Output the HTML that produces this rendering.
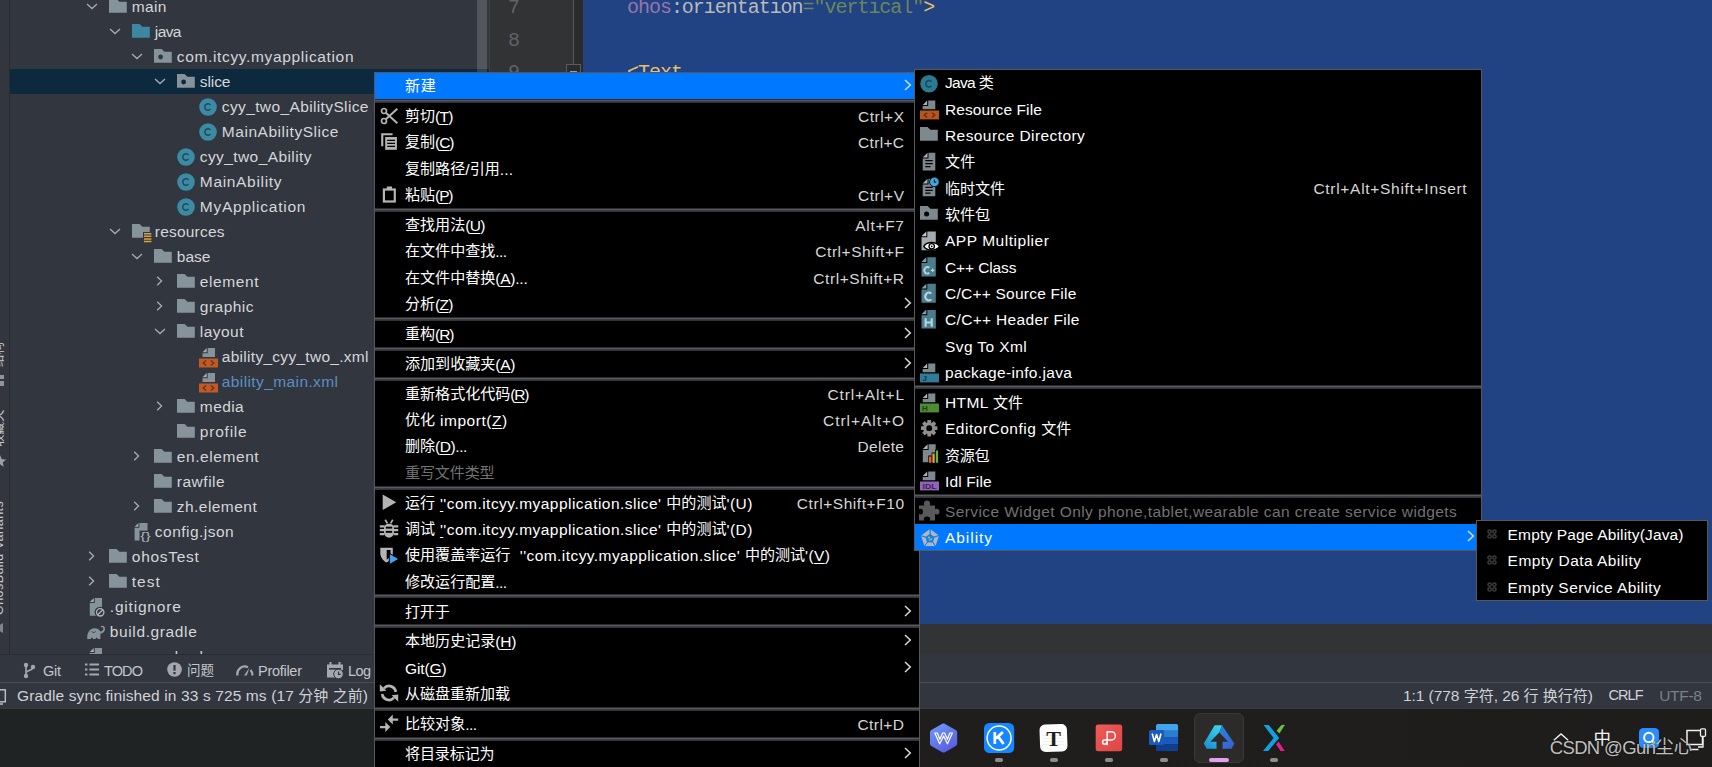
<!DOCTYPE html>
<html lang="zh-CN"><head><meta charset="utf-8"><title>DevEco Studio</title><style>
html,body{margin:0;padding:0;background:#32363f;}
body{width:1712px;height:767px;position:relative;overflow:hidden;font-family:"Liberation Sans","Noto Sans CJK SC",sans-serif;}
.r{position:absolute;display:block;}
.t{position:absolute;white-space:pre;display:block;}
.m{font-family:"Liberation Mono","DejaVu Sans Mono",monospace;}
u{text-decoration:underline;text-underline-offset:2px;text-decoration-thickness:1px;}
</style></head>
<body>
<div class="r" style="left:0px;top:0px;width:1712px;height:767px;background:#32363f;"></div>
<div class="r" style="left:583px;top:0px;width:1129px;height:624px;background:#214283;"></div>
<div class="r" style="left:489px;top:0px;width:94px;height:624px;background:#313335;"></div>
<div class="r" style="left:573px;top:0px;width:1px;height:624px;background:#555759;"></div>
<div class="r" style="left:574px;top:0px;width:9px;height:624px;background:#2b2b2b;"></div>
<div class="r" style="left:477px;top:0px;width:10px;height:654px;background:#53565d;"></div>
<div class="r" style="left:487px;top:0px;width:2px;height:654px;background:#32363f;"></div>
<div class="r" style="left:489px;top:0px;width:1px;height:654px;background:#3d3f43;"></div>
<div class="r" style="left:0px;top:0px;width:9px;height:654px;background:#33363f;"></div>
<div class="r" style="left:9px;top:0px;width:1px;height:654px;background:#2a2b2d;"></div>
<div class="r" style="left:489px;top:624px;width:1223px;height:31px;background:#313335;"></div>
<div class="r" style="left:0px;top:654px;width:1712px;height:29px;background:#32363f;"></div>
<div class="r" style="left:0px;top:654px;width:489px;height:1px;background:#2c2e33;"></div>
<div class="r" style="left:0px;top:682px;width:1712px;height:1px;background:#4a4c50;"></div>
<div class="r" style="left:0px;top:683px;width:1712px;height:25px;background:#32363f;"></div>
<div class="r" style="left:0px;top:708px;width:1712px;height:59px;background:linear-gradient(90deg,#202324 0,#202324 22%,#1f1e1c 54%,#1f1d1b 100%);"></div>
<div class="r" style="left:0px;top:708px;width:1712px;height:1px;background:#3a3b3b;"></div>
<span class="t m" style="left:627px;top:-9px;height:33px;line-height:33px;font-size:20px;letter-spacing:-1.03px"><span style="color:#9876aa">ohos</span><span style="color:#bababa">:orientation</span><span style="color:#6a8759">="vertical"</span><span style="color:#e8bf6a">&gt;</span></span>
<span class="t m" style="left:627px;top:56px;height:33px;line-height:33px;font-size:20px;letter-spacing:-1.03px"><span style="color:#e8bf6a">&lt;Text</span></span>
<span class="t m" style="left:508px;top:-9px;height:33px;line-height:33px;font-size:20px;color:#606366">7</span>
<span class="t m" style="left:508px;top:24px;height:33px;line-height:33px;font-size:20px;color:#606366">8</span>
<span class="t m" style="left:508px;top:56px;height:33px;line-height:33px;font-size:20px;color:#606366">9</span>
<svg class="r" style="left:566px;top:64.3px;" width="16" height="16" viewBox="0 0 16 16"><rect x="0.5" y="0.5" width="14" height="14" fill="#2b2b2b" stroke="#5a5d60"/><rect x="4" y="7" width="7" height="1.4" fill="#9a9da0"/></svg>
<div class="r" style="left:10px;top:69px;width:467px;height:25px;background:#0d293e;"></div>
<div class="r" style="left:477px;top:69px;width:10px;height:25px;background:#2d4358;"></div>
<div class="r" style="left:487px;top:69px;width:2px;height:25px;background:#0d293e;"></div>
<svg class="r" style="left:85.75px;top:2.55px;" width="12" height="8" viewBox="0 0 12 8"><path d="M1 1.100 L6 5.550 L11 1.100" fill="none" stroke="#a7abb1" stroke-width="1.350"/></svg>
<svg class="r" style="left:109px;top:-0.7000000000000002px;" width="18" height="14" viewBox="0 0 18 14"><path d="M0 0 H7.6 L10.4 2.8 H17.8 V13.7 H0 Z" fill="#87939a"/></svg>
<span class="t" style="left:131.8px;top:-6px;height:25px;line-height:25px;color:#d4d6d9;font-size:15.5px;letter-spacing:0.364px;">main</span>
<svg class="r" style="left:108.75px;top:27.55px;" width="12" height="8" viewBox="0 0 12 8"><path d="M1 1.100 L6 5.550 L11 1.100" fill="none" stroke="#a7abb1" stroke-width="1.350"/></svg>
<svg class="r" style="left:132px;top:24.3px;" width="18" height="14" viewBox="0 0 18 14"><path d="M0 0 H7.6 L10.4 2.8 H17.8 V13.7 H0 Z" fill="#3e87a3"/></svg>
<span class="t" style="left:154.8px;top:19px;height:25px;line-height:25px;color:#d4d6d9;font-size:15.5px;letter-spacing:-0.579px;">java</span>
<svg class="r" style="left:130.75px;top:52.55px;" width="12" height="8" viewBox="0 0 12 8"><path d="M1 1.100 L6 5.550 L11 1.100" fill="none" stroke="#a7abb1" stroke-width="1.350"/></svg>
<svg class="r" style="left:154px;top:49.3px;" width="18" height="14" viewBox="0 0 18 14"><path d="M0 0 H7.6 L10.4 2.8 H17.8 V13.7 H0 Z" fill="#87939a"/><circle cx="6.6" cy="8" r="2.4" fill="#32363f"/></svg>
<span class="t" style="left:176.8px;top:44px;height:25px;line-height:25px;color:#d4d6d9;font-size:15.5px;letter-spacing:0.645px;">com.itcyy.myapplication</span>
<svg class="r" style="left:153.75px;top:77.55px;" width="12" height="8" viewBox="0 0 12 8"><path d="M1 1.100 L6 5.550 L11 1.100" fill="none" stroke="#a7abb1" stroke-width="1.350"/></svg>
<svg class="r" style="left:177px;top:74.3px;" width="18" height="14" viewBox="0 0 18 14"><path d="M0 0 H7.6 L10.4 2.8 H17.8 V13.7 H0 Z" fill="#87939a"/><circle cx="6.6" cy="8" r="2.4" fill="#0d293e"/></svg>
<span class="t" style="left:199.8px;top:69px;height:25px;line-height:25px;color:#d4d6d9;font-size:15.5px;letter-spacing:-0.079px;">slice</span>
<svg class="r" style="left:198.5px;top:97.5px;" width="18" height="18" viewBox="0 0 18 18"><circle cx="9" cy="9" r="8.8" fill="#3c8ba5"/><path d="M11.500 7 A3.200 3.200 0 1 0 11.500 11" fill="none" stroke="#27485a" stroke-width="1.500"/></svg>
<span class="t" style="left:221.8px;top:94px;height:25px;line-height:25px;color:#d4d6d9;font-size:15.5px;letter-spacing:0.376px;">cyy_two_AbilitySlice</span>
<svg class="r" style="left:198.5px;top:122.5px;" width="18" height="18" viewBox="0 0 18 18"><circle cx="9" cy="9" r="8.8" fill="#3c8ba5"/><path d="M11.500 7 A3.200 3.200 0 1 0 11.500 11" fill="none" stroke="#27485a" stroke-width="1.500"/></svg>
<span class="t" style="left:221.8px;top:119px;height:25px;line-height:25px;color:#d4d6d9;font-size:15.5px;letter-spacing:0.544px;">MainAbilitySlice</span>
<svg class="r" style="left:176.5px;top:147.5px;" width="18" height="18" viewBox="0 0 18 18"><circle cx="9" cy="9" r="8.8" fill="#3c8ba5"/><path d="M11.500 7 A3.200 3.200 0 1 0 11.500 11" fill="none" stroke="#27485a" stroke-width="1.500"/></svg>
<span class="t" style="left:199.8px;top:144px;height:25px;line-height:25px;color:#d4d6d9;font-size:15.5px;letter-spacing:0.409px;">cyy_two_Ability</span>
<svg class="r" style="left:176.5px;top:172.5px;" width="18" height="18" viewBox="0 0 18 18"><circle cx="9" cy="9" r="8.8" fill="#3c8ba5"/><path d="M11.500 7 A3.200 3.200 0 1 0 11.500 11" fill="none" stroke="#27485a" stroke-width="1.500"/></svg>
<span class="t" style="left:199.8px;top:169px;height:25px;line-height:25px;color:#d4d6d9;font-size:15.5px;letter-spacing:0.675px;">MainAbility</span>
<svg class="r" style="left:176.5px;top:197.5px;" width="18" height="18" viewBox="0 0 18 18"><circle cx="9" cy="9" r="8.8" fill="#3c8ba5"/><path d="M11.500 7 A3.200 3.200 0 1 0 11.500 11" fill="none" stroke="#27485a" stroke-width="1.500"/></svg>
<span class="t" style="left:199.8px;top:194px;height:25px;line-height:25px;color:#d4d6d9;font-size:15.5px;letter-spacing:0.767px;">MyApplication</span>
<svg class="r" style="left:108.75px;top:227.55px;" width="12" height="8" viewBox="0 0 12 8"><path d="M1 1.100 L6 5.550 L11 1.100" fill="none" stroke="#a7abb1" stroke-width="1.350"/></svg>
<svg class="r" style="left:132px;top:224.4px;" width="18" height="14" viewBox="0 0 18 14"><path d="M0 0 H7.6 L10.4 2.8 H17.8 V13.7 H0 Z" fill="#87939a"/></svg>
<svg class="r" style="left:142.5px;top:232px;" width="9" height="11" viewBox="0 0 9 11"><rect width="9" height="11" fill="#32363f"/><path d="M1 1.7H8.4M1 4.3H8.4M1 6.9H8.4M1 9.500H8.4" stroke="#d9a343" stroke-width="1.500"/></svg>
<span class="t" style="left:154.8px;top:219px;height:25px;line-height:25px;color:#d4d6d9;font-size:15.5px;letter-spacing:0.205px;">resources</span>
<svg class="r" style="left:130.75px;top:252.55px;" width="12" height="8" viewBox="0 0 12 8"><path d="M1 1.100 L6 5.550 L11 1.100" fill="none" stroke="#a7abb1" stroke-width="1.350"/></svg>
<svg class="r" style="left:154px;top:249.3px;" width="18" height="14" viewBox="0 0 18 14"><path d="M0 0 H7.6 L10.4 2.8 H17.8 V13.7 H0 Z" fill="#87939a"/></svg>
<span class="t" style="left:176.8px;top:244px;height:25px;line-height:25px;color:#d4d6d9;font-size:15.5px;letter-spacing:0.025px;">base</span>
<svg class="r" style="left:155.6px;top:275.1px;" width="8" height="12" viewBox="0 0 8 12"><path d="M1.200 1.750 L5.550 6 L1.200 10.250" fill="none" stroke="#a7abb1" stroke-width="1.350"/></svg>
<svg class="r" style="left:177px;top:274.3px;" width="18" height="14" viewBox="0 0 18 14"><path d="M0 0 H7.6 L10.4 2.8 H17.8 V13.7 H0 Z" fill="#87939a"/></svg>
<span class="t" style="left:199.8px;top:269px;height:25px;line-height:25px;color:#d4d6d9;font-size:15.5px;letter-spacing:0.591px;">element</span>
<svg class="r" style="left:155.6px;top:300.1px;" width="8" height="12" viewBox="0 0 8 12"><path d="M1.200 1.750 L5.550 6 L1.200 10.250" fill="none" stroke="#a7abb1" stroke-width="1.350"/></svg>
<svg class="r" style="left:177px;top:299.3px;" width="18" height="14" viewBox="0 0 18 14"><path d="M0 0 H7.6 L10.4 2.8 H17.8 V13.7 H0 Z" fill="#87939a"/></svg>
<span class="t" style="left:199.8px;top:294px;height:25px;line-height:25px;color:#d4d6d9;font-size:15.5px;letter-spacing:0.476px;">graphic</span>
<svg class="r" style="left:153.75px;top:327.55px;" width="12" height="8" viewBox="0 0 12 8"><path d="M1 1.100 L6 5.550 L11 1.100" fill="none" stroke="#a7abb1" stroke-width="1.350"/></svg>
<svg class="r" style="left:177px;top:324.3px;" width="18" height="14" viewBox="0 0 18 14"><path d="M0 0 H7.6 L10.4 2.8 H17.8 V13.7 H0 Z" fill="#87939a"/></svg>
<span class="t" style="left:199.8px;top:319px;height:25px;line-height:25px;color:#d4d6d9;font-size:15.5px;letter-spacing:0.465px;">layout</span>
<svg class="r" style="left:199px;top:347.5px;" width="19" height="20" viewBox="0 0 19 20"><path d="M8.7 0 H16 V9 H3.5 V5.2 H8.7 Z" fill="#87939a"/><path d="M7.699999999999999 0 V4.2 H3.5 Z" fill="#a3adb3"/><rect x="0" y="10.5" width="19" height="9" fill="#c25a24"/><path d="M7.2 12.6 L4.2 15 L7.2 17.4 M11.8 12.6 L14.8 15 L11.8 17.4" fill="none" stroke="#5d3420" stroke-width="1.3"/></svg>
<span class="t" style="left:221.8px;top:344px;height:25px;line-height:25px;color:#d4d6d9;font-size:15.5px;letter-spacing:0.285px;">ability_cyy_two_.xml</span>
<svg class="r" style="left:199px;top:372.5px;" width="19" height="20" viewBox="0 0 19 20"><path d="M8.7 0 H16 V9 H3.5 V5.2 H8.7 Z" fill="#87939a"/><path d="M7.699999999999999 0 V4.2 H3.5 Z" fill="#a3adb3"/><rect x="0" y="10.5" width="19" height="9" fill="#c25a24"/><path d="M7.2 12.6 L4.2 15 L7.2 17.4 M11.8 12.6 L14.8 15 L11.8 17.4" fill="none" stroke="#5d3420" stroke-width="1.3"/></svg>
<span class="t" style="left:221.8px;top:369px;height:25px;line-height:25px;color:#5a8fc4;font-size:15.5px;letter-spacing:0.396px;">ability_main.xml</span>
<svg class="r" style="left:155.6px;top:400.1px;" width="8" height="12" viewBox="0 0 8 12"><path d="M1.200 1.750 L5.550 6 L1.200 10.250" fill="none" stroke="#a7abb1" stroke-width="1.350"/></svg>
<svg class="r" style="left:177px;top:399.3px;" width="18" height="14" viewBox="0 0 18 14"><path d="M0 0 H7.6 L10.4 2.8 H17.8 V13.7 H0 Z" fill="#87939a"/></svg>
<span class="t" style="left:199.8px;top:394px;height:25px;line-height:25px;color:#d4d6d9;font-size:15.5px;letter-spacing:0.420px;">media</span>
<svg class="r" style="left:177px;top:424.3px;" width="18" height="14" viewBox="0 0 18 14"><path d="M0 0 H7.6 L10.4 2.8 H17.8 V13.7 H0 Z" fill="#87939a"/></svg>
<span class="t" style="left:199.8px;top:419px;height:25px;line-height:25px;color:#d4d6d9;font-size:15.5px;letter-spacing:0.780px;">profile</span>
<svg class="r" style="left:132.6px;top:450.1px;" width="8" height="12" viewBox="0 0 8 12"><path d="M1.200 1.750 L5.550 6 L1.200 10.250" fill="none" stroke="#a7abb1" stroke-width="1.350"/></svg>
<svg class="r" style="left:154px;top:449.3px;" width="18" height="14" viewBox="0 0 18 14"><path d="M0 0 H7.6 L10.4 2.8 H17.8 V13.7 H0 Z" fill="#87939a"/></svg>
<span class="t" style="left:176.8px;top:444px;height:25px;line-height:25px;color:#d4d6d9;font-size:15.5px;letter-spacing:0.577px;">en.element</span>
<svg class="r" style="left:154px;top:474.3px;" width="18" height="14" viewBox="0 0 18 14"><path d="M0 0 H7.6 L10.4 2.8 H17.8 V13.7 H0 Z" fill="#87939a"/></svg>
<span class="t" style="left:176.8px;top:469px;height:25px;line-height:25px;color:#d4d6d9;font-size:15.5px;letter-spacing:0.517px;">rawfile</span>
<svg class="r" style="left:132.6px;top:500.1px;" width="8" height="12" viewBox="0 0 8 12"><path d="M1.200 1.750 L5.550 6 L1.200 10.250" fill="none" stroke="#a7abb1" stroke-width="1.350"/></svg>
<svg class="r" style="left:154px;top:499.3px;" width="18" height="14" viewBox="0 0 18 14"><path d="M0 0 H7.6 L10.4 2.8 H17.8 V13.7 H0 Z" fill="#87939a"/></svg>
<span class="t" style="left:176.8px;top:494px;height:25px;line-height:25px;color:#d4d6d9;font-size:15.5px;letter-spacing:0.452px;">zh.element</span>
<svg class="r" style="left:132px;top:522px;" width="20" height="20" viewBox="0 0 20 20"><path d="M7.400 1 H15.500 V18.500 H2.600 V5.800 H7.400 Z" fill="#87939a"/><path d="M6.400 1 V4.800 H2.600 Z" fill="#a3adb3"/><rect x="7.500" y="8.600" width="12" height="11" fill="#32363f"/><text x="13.400" y="18" font-size="11.500" text-anchor="middle" fill="#aeb6bc" font-family="Liberation Sans,sans-serif" textLength="10.500" lengthAdjust="spacingAndGlyphs">{}</text></svg>
<span class="t" style="left:154.8px;top:519px;height:25px;line-height:25px;color:#d4d6d9;font-size:15.5px;letter-spacing:0.479px;">config.json</span>
<svg class="r" style="left:87.6px;top:550.1px;" width="8" height="12" viewBox="0 0 8 12"><path d="M1.200 1.750 L5.550 6 L1.200 10.250" fill="none" stroke="#a7abb1" stroke-width="1.350"/></svg>
<svg class="r" style="left:109px;top:549.3px;" width="18" height="14" viewBox="0 0 18 14"><path d="M0 0 H7.6 L10.4 2.8 H17.8 V13.7 H0 Z" fill="#87939a"/></svg>
<span class="t" style="left:131.8px;top:544px;height:25px;line-height:25px;color:#d4d6d9;font-size:15.5px;letter-spacing:0.708px;">ohosTest</span>
<svg class="r" style="left:87.6px;top:575.1px;" width="8" height="12" viewBox="0 0 8 12"><path d="M1.200 1.750 L5.550 6 L1.200 10.250" fill="none" stroke="#a7abb1" stroke-width="1.350"/></svg>
<svg class="r" style="left:109px;top:574.3px;" width="18" height="14" viewBox="0 0 18 14"><path d="M0 0 H7.6 L10.4 2.8 H17.8 V13.7 H0 Z" fill="#87939a"/></svg>
<span class="t" style="left:131.8px;top:569px;height:25px;line-height:25px;color:#d4d6d9;font-size:15.5px;letter-spacing:1.005px;">test</span>
<svg class="r" style="left:87px;top:597px;" width="20" height="20" viewBox="0 0 20 20"><path d="M7.800 1 H15 V18.800 H2.800 V6 H7.800 Z" fill="#87939a"/><path d="M6.800 1 V5 H2.800 Z" fill="#a3adb3"/><circle cx="13.200" cy="15.300" r="5.600" fill="#32363f"/><circle cx="13.200" cy="15.300" r="3.700" fill="none" stroke="#aeb6bc" stroke-width="1.300"/><path d="M10.700 17.800 L15.700 12.800" stroke="#aeb6bc" stroke-width="1.300"/></svg>
<span class="t" style="left:109.8px;top:594px;height:25px;line-height:25px;color:#d4d6d9;font-size:15.5px;letter-spacing:0.804px;">.gitignore</span>
<svg class="r" style="left:86.5px;top:625px;" width="20" height="15" viewBox="0 0 20 15"><path d="M0.3 14 C-0.2 8 2.500 3.400 7.500 3.200 C10.500 3.100 12.600 4.600 13.200 6.400 C15 6.400 16.300 5 16.300 3.400 C16.300 2.100 15.200 1.800 14.700 2.500 L13.500 1.600 C14.800 -0.100 18 0.400 18 3.400 C18 6.600 15.800 8.400 13.400 8.400 V14 H10.800 C10.800 12.300 8.600 12.300 8.600 14 H6 C6 12.300 3.800 12.300 3.800 14 Z" fill="#87939a"/><path d="M4.500 6.500 C6 8 8 7.600 8.800 6.400" fill="none" stroke="#32363f" stroke-width="0.800"/></svg>
<span class="t" style="left:109.8px;top:619px;height:25px;line-height:25px;color:#d4d6d9;font-size:15.5px;letter-spacing:0.622px;">build.gradle</span>
<div class="r" style="left:10px;top:644px;width:467px;height:10px;overflow:hidden">
<svg class="r" style="left:77px;top:3px" width="20" height="20" viewBox="0 0 20 20"><path d="M7.800 1 H15 V18.800 H2.800 V6 H7.800 Z" fill="#87939a"/><path d="M6.800 1 V5 H2.800 Z" fill="#a3adb3"/></svg>
<span class="t" style="left:101.7px;top:0px;height:25px;line-height:25px;color:#d4d6d9;font-size:15.5px;letter-spacing:0.628px;">proguard-rules.pro</span>
</div>
<div class="r" style="left:0;top:0;width:9px;height:654px;overflow:hidden">
<span class="t" style="left:-8px;top:367px;height:14px;line-height:14px;font-size:12.500px;letter-spacing:0px;color:#c6c9cd;transform:rotate(-90deg);transform-origin:0 0;">结构</span>
<span class="t" style="left:-8px;top:447.4px;height:14px;line-height:14px;font-size:12.500px;letter-spacing:0px;color:#c6c9cd;transform:rotate(-90deg);transform-origin:0 0;">收藏夹</span>
<span class="t" style="left:-8px;top:615px;height:14px;line-height:14px;font-size:12.500px;letter-spacing:0.45px;color:#c6c9cd;transform:rotate(-90deg);transform-origin:0 0;">OhosBuild Variants</span>
</div>
<div class="r" style="left:0px;top:374.6px;width:3.5px;height:4.8px;background:#8f939a;"></div>
<div class="r" style="left:0px;top:381px;width:3.5px;height:4.8px;background:#8f939a;"></div>
<svg class="r" style="left:-6.5px;top:454.5px;" width="12" height="12" viewBox="0 0 12 12"><path d="M6 0 L7.800 4.200 L12 4.500 L8.700 7.400 L9.800 11.800 L6 9.300 L2.200 11.800 L3.300 7.400 L0 4.500 L4.200 4.200 Z" fill="#9da0a6"/></svg>
<svg class="r" style="left:-6px;top:622.5px;" width="11" height="10" viewBox="0 0 11 10"><path d="M0 5 L9 0 V10 Z" fill="#7f838a"/></svg>
<svg class="r" style="left:23px;top:662px;" width="13" height="17" viewBox="0 0 13 17"><circle cx="3" cy="3" r="2.2" fill="#a4a8ae"/><circle cx="3" cy="14" r="2.2" fill="#a4a8ae"/><circle cx="10" cy="5" r="2.2" fill="#a4a8ae"/><path d="M3 3 V14 M3 11 C3 8 10 9 10 5" fill="none" stroke="#a4a8ae" stroke-width="1.6"/></svg>
<span class="t" style="left:43px;top:657px;height:28px;line-height:28px;color:#c3c6cb;font-size:14.5px;letter-spacing:-0.266px;">Git</span>
<svg class="r" style="left:85px;top:663px;" width="14" height="13" viewBox="0 0 14 13"><path d="M0 1.5H2.4M4.4 1.5H14M0 6.5H2.4M4.4 6.5H14M0 11.5H2.4M4.4 11.5H14" stroke="#a4a8ae" stroke-width="2.2"/></svg>
<span class="t" style="left:104px;top:657px;height:28px;line-height:28px;color:#c3c6cb;font-size:14.5px;letter-spacing:-0.875px;">TODO</span>
<svg class="r" style="left:166.5px;top:662px;" width="15" height="15" viewBox="0 0 15 15"><circle cx="7.5" cy="7.5" r="7.3" fill="#a4a8ae"/><rect x="6.4" y="3" width="2.2" height="5.6" fill="#32363f"/><rect x="6.4" y="10" width="2.2" height="2.2" fill="#32363f"/></svg>
<span class="t" style="left:187px;top:657px;height:28px;line-height:28px;color:#c3c6cb;font-size:13.5px;letter-spacing:0.000px;">问题</span>
<svg class="r" style="left:236px;top:664px;" width="18" height="12" viewBox="0 0 18 12"><path d="M1.5 11.5 A7.5 7.5 0 0 1 12 3.2" fill="none" stroke="#a4a8ae" stroke-width="2.3"/><path d="M14.5 6 A7.5 7.5 0 0 1 16.5 11.5" fill="none" stroke="#a4a8ae" stroke-width="2.3"/><path d="M8 11.5 L13.5 3.5 L10.8 11.5 Z" fill="#a4a8ae"/></svg>
<span class="t" style="left:258px;top:657px;height:28px;line-height:28px;color:#c3c6cb;font-size:14.5px;letter-spacing:-0.277px;">Profiler</span>
<svg class="r" style="left:326px;top:662px;" width="18" height="17" viewBox="0 0 18 17"><path d="M1 2.5 H17 V8 H9 V15.5 H1 Z" fill="#a4a8ae"/><rect x="3.5" y="0" width="2" height="4" fill="#a4a8ae"/><rect x="12.5" y="0" width="2" height="4" fill="#a4a8ae"/><rect x="3" y="6" width="12" height="1.6" fill="#32363f"/><circle cx="12.5" cy="12" r="4.8" fill="#a4a8ae" stroke="#32363f" stroke-width="1"/><path d="M12.5 9.5 V12.3 H14.8" fill="none" stroke="#32363f" stroke-width="1.2"/></svg>
<span class="t" style="left:348px;top:657px;height:28px;line-height:28px;color:#c3c6cb;font-size:14.5px;letter-spacing:-0.602px;">Log</span>
<svg class="r" style="left:-6.5px;top:688.5px;" width="13" height="16" viewBox="0 0 13 16"><rect x="0.8" y="0.8" width="10.5" height="12" fill="none" stroke="#b9bcc1" stroke-width="1.5"/><path d="M2 15 H9" stroke="#b9bcc1" stroke-width="1.5"/></svg>
<span class="t" style="left:17px;top:683px;height:25px;line-height:25px;color:#d0d2d6;font-size:15.5px;letter-spacing:0.120px;">Gradle sync finished in 33 s 725 ms (17 <span style="font-size:15px;letter-spacing:0;">分钟</span> <span style="font-size:15px;letter-spacing:0;">之前</span>)</span>
<span class="t" style="left:1403px;top:683px;height:25px;line-height:25px;color:#d0d2d6;font-size:15.5px;letter-spacing:-0.059px;">1:1 (778 <span style="font-size:15px;letter-spacing:0;">字符</span>, 26 <span style="font-size:15px;letter-spacing:0;">行</span> <span style="font-size:15px;letter-spacing:0;">换行符</span>)</span>
<span class="t" style="left:1608.4px;top:683px;height:25px;line-height:25px;color:#d0d2d6;font-size:14.5px;letter-spacing:-0.858px;">CRLF</span>
<span class="t" style="left:1659.2px;top:683px;height:25px;line-height:25px;color:#7c8087;font-size:15.5px;letter-spacing:-0.305px;">UTF-8</span>
<div class="r" style="left:374px;top:72px;width:546px;height:695px;background:#000;border:1px solid #55585c;border-bottom:none;box-sizing:border-box;"></div>
<div class="r" style="left:375px;top:73px;width:544px;height:26px;background:#0078ff;"></div>
<span class="t" style="left:405px;top:73px;height:26px;line-height:26px;color:#fff;font-size:15.05px;letter-spacing:0.606px;">新建</span>
<svg class="r" style="left:904.3px;top:78.8px;" width="8" height="12" viewBox="0 0 8 12"><path d="M1 1 L6.3 6 L1 11" fill="none" stroke="#d8d8d8" stroke-width="1.5"/></svg>
<div class="r" style="left:375px;top:99px;width:544px;height:4px;background:#31343b;box-shadow:inset 0 1px 0 #2a2c31;"></div>
<div class="r" style="left:375px;top:100px;width:544px;height:1px;background:#5a5a5a;box-shadow:0 1px 0 #3c3e44;"></div>
<span class="t" style="left:405px;top:104px;height:26px;line-height:26px;color:#fff;font-size:15.5px;letter-spacing:-0.703px;"><span style="font-size:15.05px;letter-spacing:0;position:relative;top:-1px;">剪切</span>(<u>T</u>)</span>
<span class="t" style="left:858px;top:104px;height:26px;line-height:26px;color:#d6d6d6;font-size:15.5px;letter-spacing:0.500px;">Ctrl+X</span>
<span class="t" style="left:405px;top:130px;height:26px;line-height:26px;color:#fff;font-size:15.5px;letter-spacing:-1.070px;"><span style="font-size:15.05px;letter-spacing:0;position:relative;top:-1px;">复制</span>(<u>C</u>)</span>
<span class="t" style="left:858px;top:130px;height:26px;line-height:26px;color:#d6d6d6;font-size:15.5px;letter-spacing:0.328px;">Ctrl+C</span>
<span class="t" style="left:405px;top:157px;height:26px;line-height:26px;color:#fff;font-size:15.5px;letter-spacing:0.161px;"><span style="font-size:15.05px;letter-spacing:0;position:relative;top:-1px;">复制路径</span>/<span style="font-size:15.05px;letter-spacing:0;position:relative;top:-1px;">引用</span>...</span>
<span class="t" style="left:405px;top:183px;height:26px;line-height:26px;color:#fff;font-size:15.5px;letter-spacing:-1.141px;"><span style="font-size:15.05px;letter-spacing:0;position:relative;top:-1px;">粘贴</span>(<u>P</u>)</span>
<span class="t" style="left:858px;top:183px;height:26px;line-height:26px;color:#d6d6d6;font-size:15.5px;letter-spacing:0.500px;">Ctrl+V</span>
<div class="r" style="left:375px;top:208px;width:544px;height:4px;background:#31343b;box-shadow:inset 0 1px 0 #2a2c31;"></div>
<div class="r" style="left:375px;top:209px;width:544px;height:1px;background:#5a5a5a;box-shadow:0 1px 0 #3c3e44;"></div>
<span class="t" style="left:405px;top:213px;height:26px;line-height:26px;color:#fff;font-size:15.5px;letter-spacing:-0.667px;"><span style="font-size:15.05px;letter-spacing:0;position:relative;top:-1px;">查找用法</span>(<u>U</u>)</span>
<span class="t" style="left:855.2px;top:213px;height:26px;line-height:26px;color:#d6d6d6;font-size:15.5px;letter-spacing:0.713px;">Alt+F7</span>
<span class="t" style="left:405px;top:239px;height:26px;line-height:26px;color:#fff;font-size:15.5px;letter-spacing:-0.602px;"><span style="font-size:15.05px;letter-spacing:0;position:relative;top:-1px;">在文件中查找</span>...</span>
<span class="t" style="left:815.3px;top:239px;height:26px;line-height:26px;color:#d6d6d6;font-size:15.5px;letter-spacing:0.545px;">Ctrl+Shift+F</span>
<span class="t" style="left:405px;top:266px;height:26px;line-height:26px;color:#fff;font-size:15.5px;letter-spacing:-0.238px;"><span style="font-size:15.05px;letter-spacing:0;position:relative;top:-1px;">在文件中替换</span>(<u>A</u>)...</span>
<span class="t" style="left:813.3px;top:266px;height:26px;line-height:26px;color:#d6d6d6;font-size:15.5px;letter-spacing:0.571px;">Ctrl+Shift+R</span>
<span class="t" style="left:405px;top:292px;height:26px;line-height:26px;color:#fff;font-size:15.5px;letter-spacing:-0.703px;"><span style="font-size:15.05px;letter-spacing:0;position:relative;top:-1px;">分析</span>(<u>Z</u>)</span>
<svg class="r" style="left:904.3px;top:296.8px;" width="8" height="12" viewBox="0 0 8 12"><path d="M1 1 L6.3 6 L1 11" fill="none" stroke="#d8d8d8" stroke-width="1.5"/></svg>
<div class="r" style="left:375px;top:317px;width:544px;height:4px;background:#31343b;box-shadow:inset 0 1px 0 #2a2c31;"></div>
<div class="r" style="left:375px;top:318px;width:544px;height:1px;background:#5a5a5a;box-shadow:0 1px 0 #3c3e44;"></div>
<span class="t" style="left:405px;top:322px;height:26px;line-height:26px;color:#fff;font-size:15.5px;letter-spacing:-1.070px;"><span style="font-size:15.05px;letter-spacing:0;position:relative;top:-1px;">重构</span>(<u>R</u>)</span>
<svg class="r" style="left:904.3px;top:326.8px;" width="8" height="12" viewBox="0 0 8 12"><path d="M1 1 L6.3 6 L1 11" fill="none" stroke="#d8d8d8" stroke-width="1.5"/></svg>
<div class="r" style="left:375px;top:347px;width:544px;height:4px;background:#31343b;box-shadow:inset 0 1px 0 #2a2c31;"></div>
<div class="r" style="left:375px;top:348px;width:544px;height:1px;background:#5a5a5a;box-shadow:0 1px 0 #3c3e44;"></div>
<span class="t" style="left:405px;top:352px;height:26px;line-height:26px;color:#fff;font-size:15.5px;letter-spacing:-0.234px;"><span style="font-size:15.05px;letter-spacing:0;position:relative;top:-1px;">添加到收藏夹</span>(<u>A</u>)</span>
<svg class="r" style="left:904.3px;top:356.8px;" width="8" height="12" viewBox="0 0 8 12"><path d="M1 1 L6.3 6 L1 11" fill="none" stroke="#d8d8d8" stroke-width="1.5"/></svg>
<div class="r" style="left:375px;top:377px;width:544px;height:4px;background:#31343b;box-shadow:inset 0 1px 0 #2a2c31;"></div>
<div class="r" style="left:375px;top:378px;width:544px;height:1px;background:#5a5a5a;box-shadow:0 1px 0 #3c3e44;"></div>
<span class="t" style="left:405px;top:382px;height:26px;line-height:26px;color:#fff;font-size:15.5px;letter-spacing:-1.188px;"><span style="font-size:15.05px;letter-spacing:0;position:relative;top:-1px;">重新格式化代码</span>(<u>R</u>)</span>
<span class="t" style="left:827.5px;top:382px;height:26px;line-height:26px;color:#d6d6d6;font-size:15.5px;letter-spacing:0.842px;">Ctrl+Alt+L</span>
<span class="t" style="left:405px;top:408px;height:26px;line-height:26px;color:#fff;font-size:15.5px;letter-spacing:0.547px;"><span style="font-size:15.05px;letter-spacing:0;position:relative;top:-1px;">优化</span> import(<u>Z</u>)</span>
<span class="t" style="left:823px;top:408px;height:26px;line-height:26px;color:#d6d6d6;font-size:15.5px;letter-spacing:0.960px;">Ctrl+Alt+O</span>
<span class="t" style="left:405px;top:434px;height:26px;line-height:26px;color:#fff;font-size:15.5px;letter-spacing:-0.433px;"><span style="font-size:15.05px;letter-spacing:0;position:relative;top:-1px;">删除</span>(<u>D</u>)...</span>
<span class="t" style="left:857.4px;top:434px;height:26px;line-height:26px;color:#d6d6d6;font-size:15.5px;letter-spacing:0.358px;">Delete</span>
<span class="t" style="left:405px;top:460px;height:26px;line-height:26px;color:#727272;font-size:15.05px;letter-spacing:-0.136px;">重写文件类型</span>
<div class="r" style="left:375px;top:486px;width:544px;height:4px;background:#31343b;box-shadow:inset 0 1px 0 #2a2c31;"></div>
<div class="r" style="left:375px;top:487px;width:544px;height:1px;background:#5a5a5a;box-shadow:0 1px 0 #3c3e44;"></div>
<span class="t" style="left:405px;top:491px;height:26px;line-height:26px;color:#fff;font-size:15.5px;letter-spacing:0.467px;"><span style="font-size:15.05px;letter-spacing:0;position:relative;top:-1px;">运行</span> <u>'</u>'com.itcyy.myapplication.slice' <span style="font-size:15.05px;letter-spacing:0;position:relative;top:-1px;">中的测试</span>'(U)</span>
<span class="t" style="left:796.8px;top:491px;height:26px;line-height:26px;color:#d6d6d6;font-size:15.5px;letter-spacing:0.559px;">Ctrl+Shift+F10</span>
<span class="t" style="left:405px;top:517px;height:26px;line-height:26px;color:#fff;font-size:15.5px;letter-spacing:0.467px;"><span style="font-size:15.05px;letter-spacing:0;position:relative;top:-1px;">调试</span> <u>'</u>'com.itcyy.myapplication.slice' <span style="font-size:15.05px;letter-spacing:0;position:relative;top:-1px;">中的测试</span>'(D)</span>
<span class="t" style="left:405px;top:543px;height:26px;line-height:26px;color:#fff;font-size:15.5px;letter-spacing:0.426px;"><span style="font-size:15.05px;letter-spacing:0;position:relative;top:-1px;">使用覆盖率运行</span>  ''com.itcyy.myapplication.slice' <span style="font-size:15.05px;letter-spacing:0;position:relative;top:-1px;">中的测试</span>'(<u>V</u>)</span>
<span class="t" style="left:405px;top:570px;height:26px;line-height:26px;color:#fff;font-size:15.5px;letter-spacing:-0.602px;"><span style="font-size:15.05px;letter-spacing:0;position:relative;top:-1px;">修改运行配置</span>...</span>
<div class="r" style="left:375px;top:594px;width:544px;height:4px;background:#31343b;box-shadow:inset 0 1px 0 #2a2c31;"></div>
<div class="r" style="left:375px;top:595px;width:544px;height:1px;background:#5a5a5a;box-shadow:0 1px 0 #3c3e44;"></div>
<span class="t" style="left:405px;top:599px;height:26px;line-height:26px;color:#fff;font-size:15.05px;letter-spacing:-0.220px;">打开于</span>
<svg class="r" style="left:904.3px;top:604.8px;" width="8" height="12" viewBox="0 0 8 12"><path d="M1 1 L6.3 6 L1 11" fill="none" stroke="#d8d8d8" stroke-width="1.5"/></svg>
<div class="r" style="left:375px;top:624px;width:544px;height:4px;background:#31343b;box-shadow:inset 0 1px 0 #2a2c31;"></div>
<div class="r" style="left:375px;top:625px;width:544px;height:1px;background:#5a5a5a;box-shadow:0 1px 0 #3c3e44;"></div>
<span class="t" style="left:405px;top:629px;height:26px;line-height:26px;color:#fff;font-size:15.5px;letter-spacing:-0.264px;"><span style="font-size:15.05px;letter-spacing:0;position:relative;top:-1px;">本地历史记录</span>(<u>H</u>)</span>
<svg class="r" style="left:904.3px;top:633.8px;" width="8" height="12" viewBox="0 0 8 12"><path d="M1 1 L6.3 6 L1 11" fill="none" stroke="#d8d8d8" stroke-width="1.5"/></svg>
<span class="t" style="left:405px;top:656px;height:26px;line-height:26px;color:#fff;font-size:15.5px;letter-spacing:-0.101px;">Git(<u>G</u>)</span>
<svg class="r" style="left:904.3px;top:660.8px;" width="8" height="12" viewBox="0 0 8 12"><path d="M1 1 L6.3 6 L1 11" fill="none" stroke="#d8d8d8" stroke-width="1.5"/></svg>
<span class="t" style="left:405px;top:681px;height:26px;line-height:26px;color:#fff;font-size:15.05px;letter-spacing:-0.055px;">从磁盘重新加载</span>
<div class="r" style="left:375px;top:707px;width:544px;height:4px;background:#31343b;box-shadow:inset 0 1px 0 #2a2c31;"></div>
<div class="r" style="left:375px;top:708px;width:544px;height:1px;background:#5a5a5a;box-shadow:0 1px 0 #3c3e44;"></div>
<span class="t" style="left:405px;top:712px;height:26px;line-height:26px;color:#fff;font-size:15.5px;letter-spacing:-0.555px;"><span style="font-size:15.05px;letter-spacing:0;position:relative;top:-1px;">比较对象</span>...</span>
<span class="t" style="left:857.4px;top:712px;height:26px;line-height:26px;color:#d6d6d6;font-size:15.5px;letter-spacing:0.448px;">Ctrl+D</span>
<div class="r" style="left:375px;top:737px;width:544px;height:4px;background:#31343b;box-shadow:inset 0 1px 0 #2a2c31;"></div>
<div class="r" style="left:375px;top:738px;width:544px;height:1px;background:#5a5a5a;box-shadow:0 1px 0 #3c3e44;"></div>
<span class="t" style="left:405px;top:741px;height:26px;line-height:26px;color:#fff;font-size:15.05px;letter-spacing:-0.136px;">将目录标记为</span>
<svg class="r" style="left:904.3px;top:746.8px;" width="8" height="12" viewBox="0 0 8 12"><path d="M1 1 L6.3 6 L1 11" fill="none" stroke="#d8d8d8" stroke-width="1.5"/></svg>
<svg class="r" style="left:380px;top:107px;" width="18" height="18" viewBox="0 0 18 18"><circle cx="4" cy="4" r="2.500" fill="none" stroke="#b4b4b4" stroke-width="1.700"/><circle cx="4" cy="14" r="2.500" fill="none" stroke="#b4b4b4" stroke-width="1.700"/><path d="M5.800 5.800 L17.300 16.300 M5.800 12.200 L17.300 1.700" stroke="#b4b4b4" stroke-width="2"/></svg>
<svg class="r" style="left:380px;top:132px;" width="18" height="19" viewBox="0 0 18 19"><path d="M1.200 1.300 H12.600 V3.300 H3.300 V14.200 H1.200 Z" fill="#b4b4b4"/><rect x="5.200" y="5" width="11.700" height="12.800" fill="#b4b4b4"/><path d="M7.200 8.400 H15 M7.200 11.400 H15 M7.200 14.400 H15" stroke="#000" stroke-width="1.300"/></svg>
<svg class="r" style="left:380px;top:186px;" width="18" height="19" viewBox="0 0 18 19"><rect x="3.900" y="3.500" width="10.900" height="12" fill="none" stroke="#b4b4b4" stroke-width="2.200"/><rect x="6.800" y="0.500" width="5.200" height="3.600" fill="#b4b4b4"/></svg>
<svg class="r" style="left:380px;top:493px;" width="18" height="19" viewBox="0 0 18 19"><path d="M2.700 1.500 L16.200 9.300 L2.700 17.100 Z" fill="#b4b4b4"/></svg>
<svg class="r" style="left:379px;top:519px;" width="20" height="20" viewBox="0 0 20 20"><path d="M5 8.400 C5 3.400 15 3.400 15 8.400 V12.800 C15 20.600 5 20.600 5 12.800 Z" fill="#b4b4b4"/><path d="M6.200 0.700 L8.400 4.400 M13.800 0.700 L11.600 4.400" stroke="#b4b4b4" stroke-width="1.700"/><path d="M0.800 7.300 H5.500 M14.500 7.300 H19.200 M0.800 11.200 H5.500 M14.500 11.200 H19.200 M0.800 15.100 H5.500 M14.500 15.100 H19.200" stroke="#b4b4b4" stroke-width="2.200"/><rect x="6.800" y="7.700" width="6.400" height="1.900" fill="#000"/><rect x="6.800" y="11.900" width="6.400" height="1.900" fill="#000"/></svg>
<svg class="r" style="left:379px;top:546px;" width="21" height="20" viewBox="0 0 21 20"><path d="M1.300 1.800 H13.800 V7 C13.800 12 10 15.200 7.500 16.600 C5 15.200 1.300 12 1.300 7 Z" fill="#b4b4b4"/><path d="M7.700 4 H11.600 V7.500 C11.600 10.200 9.600 12.400 7.700 13.800 Z" fill="#000"/><path d="M10.300 7.300 L20 13 L10.300 18.700 Z" fill="#4a9bf5" stroke="#000" stroke-width="1"/></svg>
<svg class="r" style="left:379px;top:683px;" width="20" height="20" viewBox="0 0 20 20"><path d="M16.800 9 A6.800 6.800 0 0 0 5 5.300" fill="none" stroke="#b4b4b4" stroke-width="2.700"/><path d="M3.200 11 A6.800 6.800 0 0 0 15 14.700" fill="none" stroke="#b4b4b4" stroke-width="2.700"/><path d="M0.800 1.300 L7.300 7.800 L0.800 8.600 Z" fill="#b4b4b4"/><path d="M19.200 18.700 L12.700 12.200 L19.200 11.400 Z" fill="#b4b4b4"/></svg>
<svg class="r" style="left:379px;top:712.8px;" width="20" height="20" viewBox="0 0 20 20"><path d="M8.800 6.600 L13.800 1.600 V5.400 H19.200 V7.800 H13.800 V11.600 Z" fill="#b4b4b4"/><path d="M11.300 14.100 L6.300 9.100 V12.900 H1 V15.300 H6.300 V19.100 Z" fill="#b4b4b4"/></svg>
<div class="r" style="left:914px;top:69px;width:568px;height:482px;background:#000;border:1px solid #55585c;box-sizing:border-box;"></div>
<span class="t" style="left:945px;top:70px;height:26px;line-height:26px;color:#fff;font-size:15.5px;letter-spacing:-0.677px;">Java <span style="font-size:15.05px;letter-spacing:0;">类</span></span>
<span class="t" style="left:945px;top:97px;height:26px;line-height:26px;color:#fff;font-size:15.5px;letter-spacing:0.098px;">Resource File</span>
<span class="t" style="left:945px;top:123px;height:26px;line-height:26px;color:#fff;font-size:15.5px;letter-spacing:0.420px;">Resource Directory</span>
<span class="t" style="left:945px;top:149px;height:26px;line-height:26px;color:#fff;font-size:15.05px;letter-spacing:0.206px;">文件</span>
<span class="t" style="left:945px;top:176px;height:26px;line-height:26px;color:#fff;font-size:15.05px;letter-spacing:-0.062px;">临时文件</span>
<span class="t" style="left:1313.4px;top:176px;height:26px;line-height:26px;color:#d6d6d6;font-size:15.5px;letter-spacing:0.708px;">Ctrl+Alt+Shift+Insert</span>
<span class="t" style="left:945px;top:202px;height:26px;line-height:26px;color:#fff;font-size:15.05px;letter-spacing:-0.070px;">软件包</span>
<span class="t" style="left:945px;top:228px;height:26px;line-height:26px;color:#fff;font-size:15.5px;letter-spacing:0.526px;">APP Multiplier</span>
<span class="t" style="left:945px;top:255px;height:26px;line-height:26px;color:#fff;font-size:15.5px;letter-spacing:-0.109px;">C++ Class</span>
<span class="t" style="left:945px;top:281px;height:26px;line-height:26px;color:#fff;font-size:15.5px;letter-spacing:0.237px;">C/C++ Source File</span>
<span class="t" style="left:945px;top:307px;height:26px;line-height:26px;color:#fff;font-size:15.5px;letter-spacing:0.323px;">C/C++ Header File</span>
<span class="t" style="left:945px;top:334px;height:26px;line-height:26px;color:#fff;font-size:15.5px;letter-spacing:0.399px;">Svg To Xml</span>
<span class="t" style="left:945px;top:360px;height:26px;line-height:26px;color:#fff;font-size:15.5px;letter-spacing:0.338px;">package-info.java</span>
<div class="r" style="left:915px;top:385px;width:566px;height:4px;background:#31343b;box-shadow:inset 0 1px 0 #2a2c31;"></div>
<div class="r" style="left:915px;top:386px;width:566px;height:1px;background:#5a5a5a;box-shadow:0 1px 0 #3c3e44;"></div>
<span class="t" style="left:945px;top:390px;height:26px;line-height:26px;color:#fff;font-size:15.5px;letter-spacing:0.417px;">HTML <span style="font-size:15.05px;letter-spacing:0;">文件</span></span>
<span class="t" style="left:945px;top:416px;height:26px;line-height:26px;color:#fff;font-size:15.5px;letter-spacing:0.508px;">EditorConfig <span style="font-size:15.05px;letter-spacing:0;">文件</span></span>
<span class="t" style="left:945px;top:443px;height:26px;line-height:26px;color:#fff;font-size:15.05px;letter-spacing:-0.320px;">资源包</span>
<span class="t" style="left:945px;top:469px;height:26px;line-height:26px;color:#fff;font-size:15.5px;letter-spacing:0.135px;">Idl File</span>
<div class="r" style="left:915px;top:494px;width:566px;height:4px;background:#31343b;box-shadow:inset 0 1px 0 #2a2c31;"></div>
<div class="r" style="left:915px;top:495px;width:566px;height:1px;background:#5a5a5a;box-shadow:0 1px 0 #3c3e44;"></div>
<span class="t" style="left:945px;top:499px;height:26px;line-height:26px;color:#727272;font-size:15.5px;letter-spacing:0.412px;">Service Widget Only phone,tablet,wearable can create service widgets</span>
<div class="r" style="left:915px;top:524px;width:566px;height:26px;background:#0078ff;"></div>
<span class="t" style="left:945px;top:525px;height:26px;line-height:26px;color:#fff;font-size:15.5px;letter-spacing:0.957px;">Ability</span>
<svg class="r" style="left:1467px;top:529.8px;" width="8" height="12" viewBox="0 0 8 12"><path d="M1 1 L6.3 6 L1 11" fill="none" stroke="#d8d8d8" stroke-width="1.5"/></svg>
<div class="r" style="left:1476px;top:520px;width:232px;height:81px;background:#000;border:1px solid #55585c;box-sizing:border-box;"></div>
<span class="t" style="left:1507.6px;top:522px;height:26px;line-height:26px;color:#fff;font-size:15.5px;letter-spacing:0.157px;">Empty Page Ability(Java)</span>
<span class="t" style="left:1507.6px;top:548px;height:26px;line-height:26px;color:#fff;font-size:15.5px;letter-spacing:0.448px;">Empty Data Ability</span>
<span class="t" style="left:1507.6px;top:575px;height:26px;line-height:26px;color:#fff;font-size:15.5px;letter-spacing:0.424px;">Empty Service Ability</span>
<svg class="r" style="left:1486.5px;top:529px;" width="10" height="10" viewBox="0 0 10 10"><g fill="#3b3b3b"><circle cx="2.6" cy="2.6" r="2.4"/><circle cx="7.4" cy="2.6" r="2.4"/><circle cx="2.6" cy="7.4" r="2.4"/><circle cx="7.4" cy="7.4" r="2.4"/></g><g fill="#000"><circle cx="2.6" cy="2.6" r="0.9"/><circle cx="7.4" cy="2.6" r="0.9"/><circle cx="2.6" cy="7.4" r="0.9"/><circle cx="7.4" cy="7.4" r="0.9"/></g></svg>
<svg class="r" style="left:1486.5px;top:555px;" width="10" height="10" viewBox="0 0 10 10"><g fill="#3b3b3b"><circle cx="2.6" cy="2.6" r="2.4"/><circle cx="7.4" cy="2.6" r="2.4"/><circle cx="2.6" cy="7.4" r="2.4"/><circle cx="7.4" cy="7.4" r="2.4"/></g><g fill="#000"><circle cx="2.6" cy="2.6" r="0.9"/><circle cx="7.4" cy="2.6" r="0.9"/><circle cx="2.6" cy="7.4" r="0.9"/><circle cx="7.4" cy="7.4" r="0.9"/></g></svg>
<svg class="r" style="left:1486.5px;top:582px;" width="10" height="10" viewBox="0 0 10 10"><g fill="#3b3b3b"><circle cx="2.6" cy="2.6" r="2.4"/><circle cx="7.4" cy="2.6" r="2.4"/><circle cx="2.6" cy="7.4" r="2.4"/><circle cx="7.4" cy="7.4" r="2.4"/></g><g fill="#000"><circle cx="2.6" cy="2.6" r="0.9"/><circle cx="7.4" cy="2.6" r="0.9"/><circle cx="2.6" cy="7.4" r="0.9"/><circle cx="7.4" cy="7.4" r="0.9"/></g></svg>
<svg class="r" style="left:920px;top:74.5px;" width="18" height="18" viewBox="0 0 18 18"><circle cx="9" cy="8.800" r="8.800" fill="#2b7a94"/><path d="M11.500 6.800 A3.200 3.200 0 1 0 11.500 10.800" fill="none" stroke="#1a4557" stroke-width="1.500"/></svg>
<svg class="r" style="left:920px;top:100.1px;" width="19" height="20" viewBox="0 0 19 20"><path d="M8.2 0.5 H15.3 V9.25 H2.7 V6.0 H8.2 Z" fill="#7e888f"/><path d="M7.199999999999999 0.5 V5.0 H2.7 Z" fill="#a9b1b6"/><rect x="0" y="10.500" width="19.100" height="8.900" fill="#b9541f"/><path d="M7.200 12.800 L4.200 15.100 L7.200 17.400 M11.800 12.800 L14.800 15.100 L11.800 17.400" fill="none" stroke="#5d3118" stroke-width="1.300"/></svg>
<svg class="r" style="left:920px;top:127.2px;" width="18" height="14" viewBox="0 0 18 14"><path d="M0 0 H7.6 L10.4 2.8 H17.8 V13.7 H0 Z" fill="#7e888f"/></svg>
<svg class="r" style="left:920px;top:152px;" width="19" height="20" viewBox="0 0 19 20"><path d="M8.5 0.8 H15.3 V18.6 H2.7 V6.6 H8.5 Z" fill="#7e888f"/><path d="M7.5 0.8 V5.6 H2.7 Z" fill="#a9b1b6"/><path d="M5.300 8.700 H12.700 M5.300 11.700 H12.700 M5.300 14.700 H10.500" stroke="#000" stroke-width="1.300"/></svg>
<svg class="r" style="left:920px;top:177px;" width="20" height="20" viewBox="0 0 20 20"><path d="M8.5 1.7 H15.3 V19.2 H2.7 V7.5 H8.5 Z" fill="#7e888f"/><path d="M7.5 1.7 V6.5 H2.7 Z" fill="#a9b1b6"/><path d="M5.300 10.400 H12.700 M5.300 13.300 H12.700 M5.300 16.200 H10.500" stroke="#000" stroke-width="1.300"/><circle cx="14.400" cy="4.900" r="5.200" fill="#000"/><circle cx="14.400" cy="4.900" r="4.400" fill="#3ea6dc"/><path d="M14.400 2.500 V5.200 H16.300" fill="none" stroke="#06283b" stroke-width="1.200"/></svg>
<svg class="r" style="left:920px;top:206.2px;" width="18" height="14" viewBox="0 0 18 14"><path d="M0 0 H7.6 L10.4 2.8 H17.8 V13.7 H0 Z" fill="#7e888f"/><circle cx="6.600" cy="8" r="2.500" fill="#000"/></svg>
<svg class="r" style="left:920px;top:230.5px;" width="20" height="21" viewBox="0 0 20 21"><path d="M7.3 0.5 H15.8 V19.2 H1.5 V6.3 H7.3 Z" fill="#a4abb0"/><path d="M6.3 0.5 V5.3 H1.5 Z" fill="#c6cbcf"/><path d="M3.800 15.300 C7 10.300 16 10.300 19.600 15.300 C16 20.300 7 20.300 3.800 15.300 Z" fill="#fff" stroke="#000" stroke-width="1.400"/><circle cx="11.700" cy="15.300" r="2.700" fill="#fff" stroke="#000" stroke-width="1.300"/><circle cx="11.700" cy="15.300" r="0.900" fill="#000"/></svg>
<svg class="r" style="left:920px;top:257px;" width="19" height="20" viewBox="0 0 19 20"><path d="M7.3 0.3 H15.8 V19.5 H1.5 V6.1 H7.3 Z" fill="#4c7d8c"/><path d="M6.3 0.3 V5.1 H1.5 Z" fill="#7da1ad"/><path d="M9.300 10.800 A3 3.300 0 1 0 9.300 15.800" fill="none" stroke="#b5d6e0" stroke-width="1.900"/><path d="M10.800 13.300H14.400M12.600 11.500V15.100" stroke="#b5d6e0" stroke-width="1.200"/></svg>
<svg class="r" style="left:920px;top:283px;" width="19" height="20" viewBox="0 0 19 20"><path d="M7.3 0.7 H15.8 V19.8 H1.5 V6.5 H7.3 Z" fill="#4c7d8c"/><path d="M6.3 0.7 V5.5 H1.5 Z" fill="#7da1ad"/><path d="M11.300 10.600 A3.500 4 0 1 0 11.300 16.400" fill="none" stroke="#b5d6e0" stroke-width="2.100"/></svg>
<svg class="r" style="left:920px;top:310px;" width="19" height="20" viewBox="0 0 19 20"><path d="M7.3 -0.5 H15.8 V18.6 H1.5 V5.3 H7.3 Z" fill="#4c7d8c"/><path d="M6.3 -0.5 V4.3 H1.5 Z" fill="#7da1ad"/><path d="M5.600 8.300 V16.800 M11.700 8.300 V16.800 M5.600 12.500 H11.700" fill="none" stroke="#b5d6e0" stroke-width="2.100"/></svg>
<svg class="r" style="left:920px;top:362.9px;" width="19" height="20" viewBox="0 0 19 20"><path d="M8.2 0.5 H15.3 V9.25 H2.7 V6.0 H8.2 Z" fill="#7e888f"/><path d="M7.199999999999999 0.5 V5.0 H2.7 Z" fill="#a9b1b6"/><rect x="0" y="10.500" width="19.100" height="8.900" fill="#2f7b98"/><text x="4.7" y="18.300" font-size="8" font-weight="bold" fill="#0d3a4c" text-anchor="middle" font-family="Liberation Sans,sans-serif">J</text></svg>
<svg class="r" style="left:920px;top:392.9px;" width="19" height="20" viewBox="0 0 19 20"><path d="M8.2 0.5 H15.3 V9.25 H2.7 V6.0 H8.2 Z" fill="#7e888f"/><path d="M7.199999999999999 0.5 V5.0 H2.7 Z" fill="#a9b1b6"/><rect x="0" y="10.500" width="19.100" height="8.900" fill="#4f8a34"/><text x="5" y="18.300" font-size="8" font-weight="bold" fill="#1f3f12" text-anchor="middle" font-family="Liberation Sans,sans-serif">H</text></svg>
<svg class="r" style="left:920.6px;top:420.2px;" width="17" height="17" viewBox="0 0 17 17"><rect x="6.300" y="0" width="3.800" height="16.400" rx="0.600" fill="#8e8e8e" transform="rotate(0 8.200 8.200)"/><rect x="6.300" y="0" width="3.800" height="16.400" rx="0.600" fill="#8e8e8e" transform="rotate(45 8.200 8.200)"/><rect x="6.300" y="0" width="3.800" height="16.400" rx="0.600" fill="#8e8e8e" transform="rotate(90 8.200 8.200)"/><rect x="6.300" y="0" width="3.800" height="16.400" rx="0.600" fill="#8e8e8e" transform="rotate(135 8.200 8.200)"/><circle cx="8.200" cy="8.200" r="6" fill="#8e8e8e"/><circle cx="8.200" cy="8.200" r="2.900" fill="#000"/></svg>
<svg class="r" style="left:920px;top:444.4px;" width="20" height="20" viewBox="0 0 20 20"><path d="M8.6 0.3 H15.7 V18.3 H2.8 V6.1 H8.6 Z" fill="#7e888f"/><path d="M7.6 0.3 V5.1 H2.8 Z" fill="#a9b1b6"/><rect x="8.300" y="11.500" width="3.400" height="8" fill="#000"/><rect x="11.700" y="8.500" width="3.400" height="11" fill="#000"/><rect x="15" y="5.500" width="4" height="14" fill="#000"/><rect x="9" y="12.500" width="2.300" height="6.300" fill="#e8632a"/><rect x="12.400" y="9.500" width="2.300" height="9.300" fill="#e8a33c"/><rect x="15.800" y="6.500" width="2.300" height="12.300" fill="#62b543"/></svg>
<svg class="r" style="left:920px;top:470.5px;" width="19" height="20" viewBox="0 0 19 20"><path d="M8.2 0.5 H15.3 V9.25 H2.7 V6.0 H8.2 Z" fill="#7e888f"/><path d="M7.199999999999999 0.5 V5.0 H2.7 Z" fill="#a9b1b6"/><rect x="0" y="10.500" width="19.100" height="8.900" fill="#9064b8"/><text x="9.5" y="18.300" font-size="7.5" font-weight="bold" fill="#3c2057" text-anchor="middle" font-family="Liberation Sans,sans-serif" textLength="14" lengthAdjust="spacingAndGlyphs">IDL</text></svg>
<svg class="r" style="left:919px;top:499.5px;" width="21" height="21" viewBox="0 0 21 21"><path d="M0 5.500 H5.300 C4.200 3.500 5 0.500 8 0.500 C11 0.500 11.800 3.500 10.700 5.500 H16 V9.300 C18 8.200 20.500 9 20.500 11.700 C20.500 14.400 18 15.200 16 14.100 V20.500 H10.700 C11.800 18.500 11 16.500 8 16.500 C5 16.500 4.200 18.500 5.300 20.500 H0 V14.100 C2 15.200 4 14.400 4 11.700 C4 9 2 8.200 0 9.300 Z" fill="#595959"/></svg>
<svg class="r" style="left:919.6px;top:527.8px;" width="20" height="20" viewBox="0 0 20 20"><path d="M10.0 0.5 L19.5 7.4 L14.0 9.2 L10.0 6.3 Z" fill="#b4b6bb" stroke="#0078ff" stroke-width="0.900"/><path d="M19.5 7.4 L15.9 18.6 L12.5 13.9 L14.0 9.2 Z" fill="#b4b6bb" stroke="#0078ff" stroke-width="0.900"/><path d="M15.9 18.6 L4.1 18.6 L7.5 13.9 L12.5 13.9 Z" fill="#b4b6bb" stroke="#0078ff" stroke-width="0.900"/><path d="M4.1 18.6 L0.5 7.4 L6.0 9.2 L7.5 13.9 Z" fill="#b4b6bb" stroke="#0078ff" stroke-width="0.900"/><path d="M0.5 7.4 L10.0 0.5 L10.0 6.3 L6.0 9.2 Z" fill="#b4b6bb" stroke="#0078ff" stroke-width="0.900"/><circle cx="10" cy="10.500" r="3.300" fill="#1f7fe8"/><circle cx="9" cy="9.600" r="1" fill="#8fd14a"/><circle cx="11.200" cy="11.300" r="1" fill="#8fd14a"/><circle cx="9.600" cy="12" r="0.700" fill="#8fd14a"/></svg>
<div class="r" style="left:1194px;top:713px;width:50px;height:50px;background:#2d2b2a;border-radius:6px;border:1px solid #3a3836;box-sizing:border-box;"></div>
<svg class="r" style="left:929px;top:722px;" width="30" height="32" viewBox="0 0 30 32"><defs><linearGradient id="gw" x1="0" y1="0" x2="0.6" y2="1"><stop offset="0" stop-color="#6f9df6"/><stop offset="1" stop-color="#5a5fe0"/></linearGradient></defs><path d="M14.600 1.200 L26.800 8 Q28.200 8.800 28.200 10.400 V21.600 Q28.200 23.200 26.800 24 L16 30.200 Q14.600 31 13.200 30.200 L2.400 24 Q1 23.200 1 21.600 V10.400 Q1 8.800 2.400 8 L13.200 1.800 Q14.600 1 16 1.800 Z" fill="url(#gw)"/><path d="M5.800 11 L10.700 21.800 L14.600 14 L18.500 21.800 L23.400 11 H20.800 L18.400 17.300 L15.600 11 H13.600 L10.800 17.300 L8.400 11 Z" fill="none" stroke="#fff" stroke-width="1.200" stroke-linejoin="round"/></svg>
<svg class="r" style="left:984px;top:723px;" width="31" height="30" viewBox="0 0 31 30"><rect x="0" y="0" width="30.200" height="30" rx="5.500" fill="#1787ff"/><circle cx="15.100" cy="15" r="12" fill="none" stroke="#fff" stroke-width="1.500"/><path d="M10.800 9 V21 M18.900 9 L12 15.600 M14.200 13.600 L19.600 21" fill="none" stroke="#fff" stroke-width="2.700"/></svg>
<svg class="r" style="left:1039px;top:723px;" width="30" height="30" viewBox="0 0 30 30"><rect x="0.800" y="1.200" width="27.400" height="27.600" rx="5.500" fill="#fdfdfd" transform="rotate(-2 15 15)"/><path d="M4 12.500H25M4 15.500H25M4 18.500H25M4 21.500H25" stroke="#ececec" stroke-width="0.800"/><text x="14.600" y="22.800" font-size="22" font-weight="bold" fill="#1d1d1d" text-anchor="middle" font-family="Liberation Serif,serif">T</text></svg>
<svg class="r" style="left:1095px;top:724px;" width="28" height="28" viewBox="0 0 28 28"><defs><linearGradient id="gp" x1="0" y1="0" x2="1" y2="1"><stop offset="0" stop-color="#ef5a5a"/><stop offset="1" stop-color="#e04545"/></linearGradient></defs><rect x="0.700" y="0.600" width="26.500" height="26.600" rx="2.500" fill="url(#gp)"/><path d="M12.200 21.300 V7.800 H16.300 A4.100 4.100 0 0 1 16.300 16 H9.700 A2.100 2.100 0 1 0 11.800 18.100" fill="none" stroke="#fff" stroke-width="1.500"/></svg>
<svg class="r" style="left:1149px;top:724px;" width="30" height="28" viewBox="0 0 30 28"><clipPath id="cw"><rect x="7" y="0" width="22.100" height="27.200" rx="1.800"/></clipPath><g clip-path="url(#cw)"><rect x="7" y="0" width="23" height="6.800" fill="#41a5ee"/><rect x="7" y="6.800" width="23" height="6.800" fill="#2b7cd3"/><rect x="7" y="13.600" width="23" height="6.800" fill="#185abd"/><rect x="7" y="20.400" width="23" height="6.800" fill="#103f91"/></g><rect x="0" y="6" width="15.100" height="15" rx="1.500" fill="#185abd"/><path d="M3.200 9.500 L5.400 17.600 L7.600 10.500 L9.800 17.600 L12 9.500" fill="none" stroke="#fff" stroke-width="1.600" stroke-linejoin="round"/></svg>
<svg class="r" style="left:1203px;top:725px;" width="32" height="24" viewBox="0 0 32 24"><defs><linearGradient id="gd1" x1="0.8" y1="0" x2="0.2" y2="1"><stop offset="0" stop-color="#3ad6ea"/><stop offset="1" stop-color="#1a90d4"/></linearGradient><linearGradient id="gd2" x1="0" y1="0" x2="0.8" y2="1"><stop offset="0" stop-color="#2488e2"/><stop offset="1" stop-color="#3a62cf"/></linearGradient></defs><path d="M11.600 0.200 H19 L16.300 7.500 V23.700 H3.700 L0.800 18.400 Z" fill="url(#gd1)"/><path d="M19 0.200 L31.300 18.400 L28.600 23.700 H16.300 V7.500 Z" fill="url(#gd2)"/><path d="M16.300 7.500 L25.100 16.700 H19.600 V24 H13.500 V16.700 H7.300 Z" fill="#2d2b2a"/></svg>
<svg class="r" style="left:1262px;top:724px;" width="24" height="28" viewBox="0 0 24 28"><path d="M1.600 1 H6.800 L17.200 14 L6.200 27 H1 L11.600 14 Z" fill="#10a2de"/><path d="M22.800 1 L17.400 9.600 L14.600 6.800 L19 1.600 Q20.600 0.400 22.800 1 Z" fill="#6cc04a"/><path d="M16.400 17.400 L22.800 27 H18.600 L14.200 20.400 Z" fill="#e91e8c"/></svg>
<div class="r" style="left:994.9px;top:758.2px;width:8px;height:3.6px;background:#8c8c8c;border-radius:1.8px;"></div>
<div class="r" style="left:1049.8px;top:758.2px;width:8px;height:3.6px;background:#8c8c8c;border-radius:1.8px;"></div>
<div class="r" style="left:1105.0px;top:758.2px;width:8px;height:3.6px;background:#8c8c8c;border-radius:1.8px;"></div>
<div class="r" style="left:1159.7px;top:758.2px;width:8px;height:3.6px;background:#8c8c8c;border-radius:1.8px;"></div>
<div class="r" style="left:1269.9px;top:758.2px;width:8px;height:3.6px;background:#8c8c8c;border-radius:1.8px;"></div>
<div class="r" style="left:1209.1000000000001px;top:758.0px;width:19.6px;height:4px;background:#e3a0ef;border-radius:2.0px;"></div>
<svg class="r" style="left:1553px;top:731px;" width="16" height="10" viewBox="0 0 16 10"><path d="M0.800 9.200 L8 3 L15.200 9.200" fill="none" stroke="#f0f0f0" stroke-width="1.400"/></svg>
<span class="t" style="left:1593.4px;top:727px;height:22px;line-height:22px;color:#f4f4f4;font-size:17.5px;">中</span>
<svg class="r" style="left:1639px;top:728px;" width="20" height="20" viewBox="0 0 20 20"><rect width="20.100" height="20" rx="4.500" fill="#2b8cff"/><circle cx="9.800" cy="9.400" r="4.700" fill="none" stroke="#fff" stroke-width="1.900"/><path d="M12.800 12.800 L14.600 15" stroke="#fff" stroke-width="1.800"/><circle cx="15" cy="14.700" r="1.400" fill="#8be04a"/></svg>
<svg class="r" style="left:1686px;top:727.7px;" width="21" height="24" viewBox="0 0 21 24"><rect x="1" y="2.500" width="15.500" height="14" fill="none" stroke="#f0f0f0" stroke-width="1.500"/><path d="M5 21.500 H12.500" stroke="#f0f0f0" stroke-width="1.500"/><rect x="14.500" y="0.800" width="5" height="7.500" rx="1" fill="#1e1f1e" stroke="#f0f0f0" stroke-width="1.300"/><path d="M17 8 V19 H12" fill="none" stroke="#f0f0f0" stroke-width="1.300"/></svg>
<span class="t" style="left:1549.7px;top:736px;height:24px;line-height:24px;color:rgba(225,225,225,0.85);font-size:18.5px;letter-spacing:-0.629px;text-shadow:0 0 1.500px rgba(0,0,0,.9);">CSDN @Gun<span style="font-size:18.5px;letter-spacing:0;position:relative;top:-1px;">尘心</span></span>
</body></html>
